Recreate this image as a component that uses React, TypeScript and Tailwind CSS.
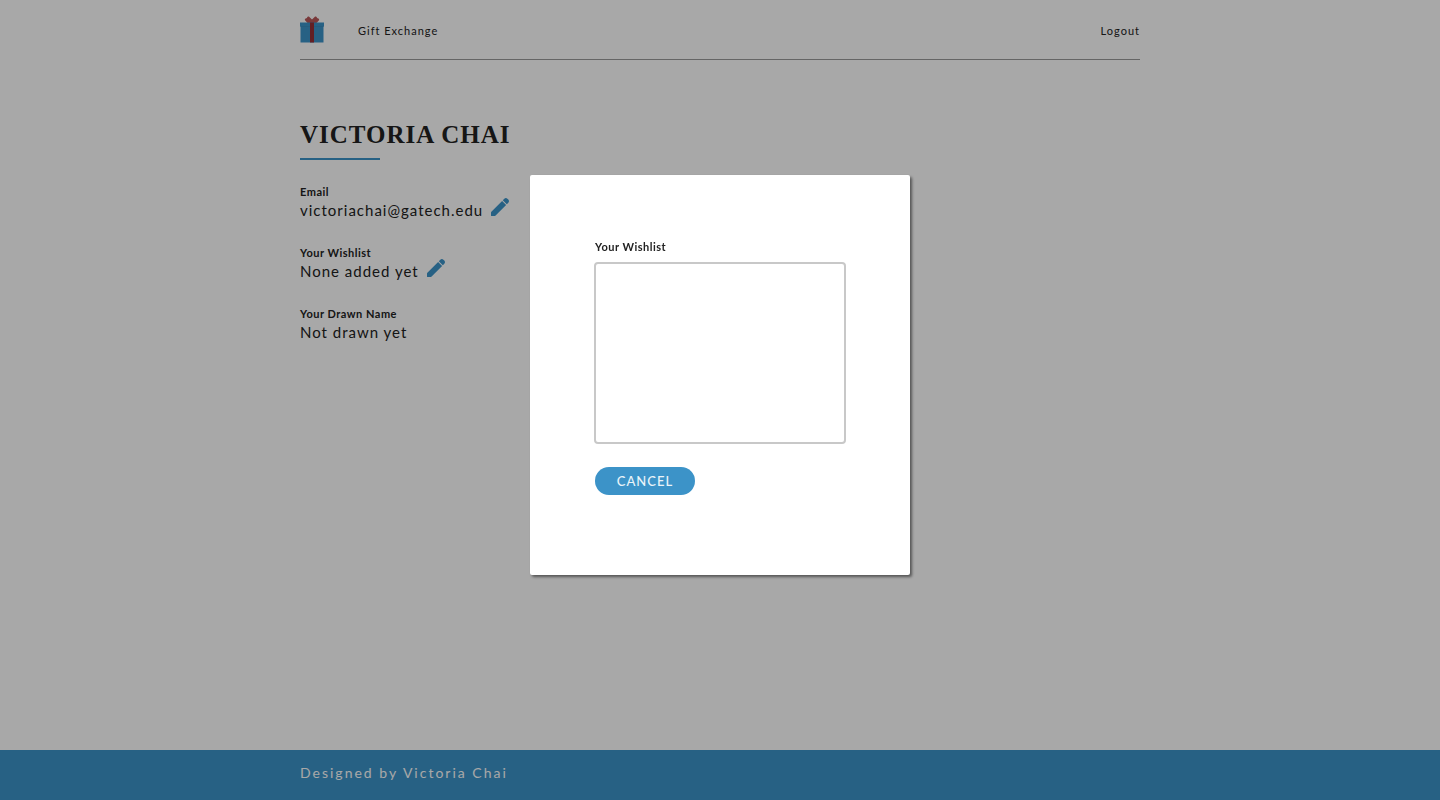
import { useState } from "react";

function GiftIcon() {
  return (
    <svg viewBox="0 0 24 27" className="h-[27px] w-6" aria-hidden="true">
      <path
        d="M12 3.600L14.600 1C15.400.2 16.500.4 16.900 1.500C17 1.900 17.200 2.100 17.600 2.200C19 2.400 19.700 3.600 18.800 4.500L16 7.500H8L5.200 4.500C4.300 3.600 5 2.400 6.400 2.200C6.800 2.100 7 1.900 7.100 1.500C7.500.4 8.600.2 9.400 1Z"
        fill="#b85758"
      />
      <path d="M.5 10H23.500V26.500H.5Z" fill="#3c93c8" />
      <path d="M0 6.500H24V10.500H0Z" fill="#3c93c8" />
      <path d="M.5 10.200H23.500V10.700H.5Z" fill="#3884b2" />
      <path d="M10 6.500H14V26.500H10Z" fill="#972f38" />
    </svg>
  );
}

function PencilIcon() {
  return (
    <svg viewBox="3 3 18 18" className="size-[18px]" fill="#3c93c8" aria-hidden="true">
      <path d="M3 17.800C3 17.200 3.200 16.800 3.600 16.400L14.100 5.900L18.100 9.900L7.600 20.400C7.200 20.800 6.800 21 6.200 21H3.600C3.200 21 3 20.800 3 20.400Z" />
      <path d="M14.800 5.200L16.300 3.700C17.200 2.800 18.500 2.800 19.400 3.700L20.300 4.600C21.200 5.500 21.200 6.800 20.300 7.700L18.800 9.200Z" />
    </svg>
  );
}

type FieldProps = { label: string; value: string; onEdit?: () => void };

function Field({ label, value, onEdit }: FieldProps) {
  return (
    <div className="flex items-end gap-2">
      <div>
        <dt className="text-[11px] leading-4 font-bold tracking-[0.5px]">{label}</dt>
        <dd className="text-[15px] leading-[21px] tracking-[1px]">{value}</dd>
      </div>
      {onEdit && (
        <button type="button" aria-label={`Edit ${label}`} onClick={onEdit} className="pb-[5px]">
          <PencilIcon />
        </button>
      )}
    </div>
  );
}

export default function App() {
  const [open, setOpen] = useState(true);
  const edit = () => setOpen(true);

  return (
    <div className="flex min-h-screen flex-col bg-white font-['Lato','Liberation_Sans',sans-serif] text-[#222222]">
      <div className="mx-auto w-full max-w-[840px] grow">
        <header className="flex h-[60px] items-center justify-between border-b border-[#999999] text-[11px] tracking-[1px]">
          <nav className="flex items-center gap-[34px]">
            <a href="#home" aria-label="Home">
              <GiftIcon />
            </a>
            <a href="#exchange" className="pt-1">
              Gift Exchange
            </a>
          </nav>
          <a href="#logout" className="pt-1">
            Logout
          </a>
        </header>
        <main className="pt-[59px]">
          <h1 className="font-['Liberation_Serif',serif] text-[25px] leading-8 font-bold tracking-[1px] uppercase">
            Victoria Chai
          </h1>
          <div className="mt-[7px] h-0.5 w-20 bg-[#3c93c8]" />
          <dl className="mt-6 flex flex-col gap-6">
            <Field label="Email" value="victoriachai@gatech.edu" onEdit={edit} />
            <Field label="Your Wishlist" value="None added yet" onEdit={edit} />
            <Field label="Your Drawn Name" value="Not drawn yet" />
          </dl>
        </main>
      </div>
      <footer className="h-[50px] bg-[#3c93c8] text-white">
        <p className="mx-auto w-full max-w-[840px] pt-[11px] text-sm leading-6 tracking-[2px]">
          Designed by Victoria Chai
        </p>
      </footer>

      {open && (
        <div className="fixed inset-0 flex items-center justify-center bg-black/34 pb-[50px]">
          <div
            role="dialog"
            aria-modal="true"
            aria-label="Edit wishlist"
            className="flex h-[400px] w-[380px] flex-col items-start rounded-xs bg-white px-[65px] pt-16 shadow-[2px_2px_3px_rgba(0,0,0,0.5)]"
          >
            <label htmlFor="wishlist" className="text-[11px] leading-4 font-bold tracking-[0.5px]">
              Your Wishlist
            </label>
            <textarea
              id="wishlist"
              className="-mx-px mt-[7px] h-[182px] resize-none self-stretch rounded-sm border-2 border-[#c8c8c8] p-2 outline-none"
            />
            <button
              type="button"
              onClick={() => setOpen(false)}
              className="mt-[23px] h-7 w-[100px] rounded-full bg-[#3c93c8] pt-px text-[13px] font-medium tracking-[1px] text-[#eaf3f9]"
            >
              CANCEL
            </button>
          </div>
        </div>
      )}
    </div>
  );
}
